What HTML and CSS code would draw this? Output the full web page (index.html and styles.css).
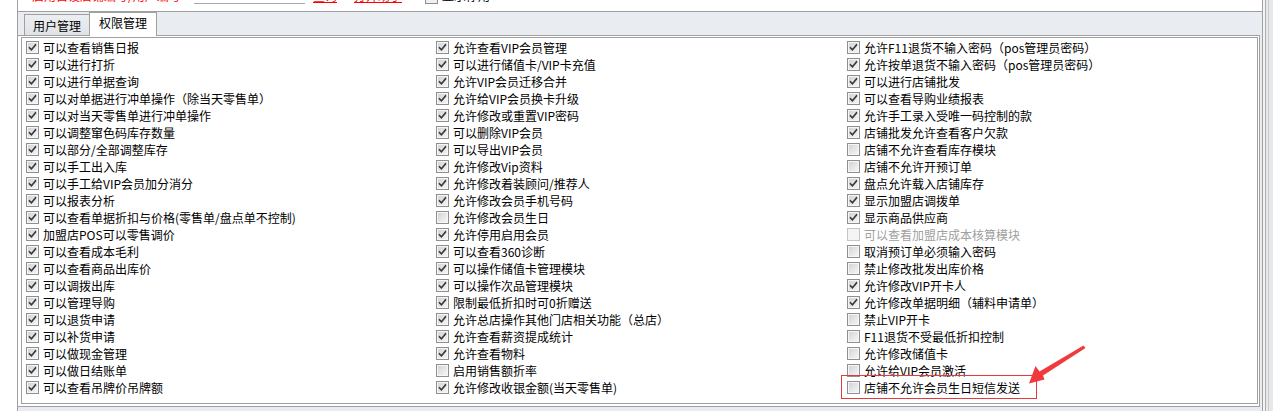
FILE: index.html
```html
<!DOCTYPE html>
<html lang="zh-CN">
<head>
<meta charset="utf-8">
<title>权限管理</title>
<link rel="stylesheet" href="styles.css">
</head>
<body>
<div class="screen">
  <div class="win">
    <div class="topbar">
      <div class="toprow">
        <span class="red lbl">启用自设店铺编号/用户编号</span>
        <span class="inp"></span>
        <span class="red link l1">查询</span>
        <span class="red link l2">打开助手</span>
        <span class="mini-cb"></span>
        <span class="blk">显示停用</span>
      </div>
    </div>
    <div class="tabctl">
      <div class="tabs">
        <div class="tab">用户管理</div>
        <div class="tab active">权限管理</div>
      </div>
      <div class="page">
        <div class="list">
          <div class="col c1">
            <div class="item"><span class="cb on"></span><span>可以查看销售日报</span></div>
            <div class="item"><span class="cb on"></span><span>可以进行打折</span></div>
            <div class="item"><span class="cb on"></span><span>可以进行单据查询</span></div>
            <div class="item"><span class="cb on"></span><span>可以对单据进行冲单操作（除当天零售单）</span></div>
            <div class="item"><span class="cb on"></span><span>可以对当天零售单进行冲单操作</span></div>
            <div class="item"><span class="cb on"></span><span>可以调整窜色码库存数量</span></div>
            <div class="item"><span class="cb on"></span><span>可以部分/全部调整库存</span></div>
            <div class="item"><span class="cb on"></span><span>可以手工出入库</span></div>
            <div class="item"><span class="cb on"></span><span>可以手工给VIP会员加分消分</span></div>
            <div class="item"><span class="cb on"></span><span>可以报表分析</span></div>
            <div class="item"><span class="cb on"></span><span>可以查看单据折扣与价格(零售单/盘点单不控制)</span></div>
            <div class="item"><span class="cb on"></span><span>加盟店POS可以零售调价</span></div>
            <div class="item"><span class="cb on"></span><span>可以查看成本毛利</span></div>
            <div class="item"><span class="cb on"></span><span>可以查看商品出库价</span></div>
            <div class="item"><span class="cb on"></span><span>可以调拨出库</span></div>
            <div class="item"><span class="cb on"></span><span>可以管理导购</span></div>
            <div class="item"><span class="cb on"></span><span>可以退货申请</span></div>
            <div class="item"><span class="cb on"></span><span>可以补货申请</span></div>
            <div class="item"><span class="cb on"></span><span>可以做现金管理</span></div>
            <div class="item"><span class="cb on"></span><span>可以做日结账单</span></div>
            <div class="item"><span class="cb on"></span><span>可以查看吊牌价吊牌额</span></div>
          </div>
          <div class="col c2">
            <div class="item"><span class="cb on"></span><span>允许查看VIP会员管理</span></div>
            <div class="item"><span class="cb on"></span><span>可以进行储值卡/VIP卡充值</span></div>
            <div class="item"><span class="cb on"></span><span>允许VIP会员迁移合并</span></div>
            <div class="item"><span class="cb on"></span><span>允许给VIP会员换卡升级</span></div>
            <div class="item"><span class="cb on"></span><span>允许修改或重置VIP密码</span></div>
            <div class="item"><span class="cb on"></span><span>可以删除VIP会员</span></div>
            <div class="item"><span class="cb on"></span><span>可以导出VIP会员</span></div>
            <div class="item"><span class="cb on"></span><span>允许修改Vip资料</span></div>
            <div class="item"><span class="cb on"></span><span>允许修改着装顾问/推荐人</span></div>
            <div class="item"><span class="cb on"></span><span>允许修改会员手机号码</span></div>
            <div class="item"><span class="cb"></span><span>允许修改会员生日</span></div>
            <div class="item"><span class="cb on"></span><span>允许停用启用会员</span></div>
            <div class="item"><span class="cb on"></span><span>可以查看360诊断</span></div>
            <div class="item"><span class="cb on"></span><span>可以操作储值卡管理模块</span></div>
            <div class="item"><span class="cb on"></span><span>可以操作次品管理模块</span></div>
            <div class="item"><span class="cb on"></span><span>限制最低折扣时可0折赠送</span></div>
            <div class="item"><span class="cb on"></span><span>允许总店操作其他门店相关功能（总店）</span></div>
            <div class="item"><span class="cb on"></span><span>允许查看薪资提成统计</span></div>
            <div class="item"><span class="cb on"></span><span>允许查看物料</span></div>
            <div class="item"><span class="cb"></span><span>启用销售额折率</span></div>
            <div class="item"><span class="cb on"></span><span>允许修改收银金额(当天零售单)</span></div>
          </div>
          <div class="col c3">
            <div class="item"><span class="cb on"></span><span>允许F11退货不输入密码（pos管理员密码）</span></div>
            <div class="item"><span class="cb on"></span><span>允许按单退货不输入密码（pos管理员密码）</span></div>
            <div class="item"><span class="cb on"></span><span>可以进行店铺批发</span></div>
            <div class="item"><span class="cb on"></span><span>可以查看导购业绩报表</span></div>
            <div class="item"><span class="cb on"></span><span>允许手工录入受唯一码控制的款</span></div>
            <div class="item"><span class="cb on"></span><span>店铺批发允许查看客户欠款</span></div>
            <div class="item"><span class="cb"></span><span>店铺不允许查看库存模块</span></div>
            <div class="item"><span class="cb"></span><span>店铺不允许开预订单</span></div>
            <div class="item"><span class="cb on"></span><span>盘点允许载入店铺库存</span></div>
            <div class="item"><span class="cb on"></span><span>显示加盟店调拨单</span></div>
            <div class="item"><span class="cb on"></span><span>显示商品供应商</span></div>
            <div class="item disabled"><span class="cb"></span><span>可以查看加盟店成本核算模块</span></div>
            <div class="item"><span class="cb"></span><span>取消预订单必须输入密码</span></div>
            <div class="item"><span class="cb"></span><span>禁止修改批发出库价格</span></div>
            <div class="item"><span class="cb on"></span><span>允许修改VIP开卡人</span></div>
            <div class="item"><span class="cb on"></span><span>允许修改单据明细（辅料申请单）</span></div>
            <div class="item"><span class="cb"></span><span>禁止VIP开卡</span></div>
            <div class="item"><span class="cb"></span><span>F11退货不受最低折扣控制</span></div>
            <div class="item"><span class="cb"></span><span>允许修改储值卡</span></div>
            <div class="item"><span class="cb"></span><span>允许给VIP会员激活</span></div>
            <div class="item"><span class="cb"></span><span>店铺不允许会员生日短信发送</span></div>
          </div>
        </div>
      </div>
    </div>
  </div>
  <div class="side"></div>
</div>
<div class="mark"></div>
<svg class="arrow" width="1273" height="411" viewBox="0 0 1273 411">
  <polygon points="1083.5,345.5 1085.5,348 1043,375.5 1044.5,379.5 1029,383.5 1035.5,366 1039.5,371.5" fill="#f03a3c"/>
</svg>
</body>
</html>
```
FILE: styles.css
```css
html, body {
  margin: 0;
  padding: 0;
}
body {
  width: 1273px;
  height: 411px;
  overflow: hidden;
  background: #ffffff;
  font-family: "Noto Sans CJK SC", "Noto Sans", sans-serif;
  font-size: 12px;
  color: #000;
  position: relative;
}
.screen {
  display: flex;
  height: 411px;
}
.win {
  margin-left: 17px;
  width: 1244px;
  border-left: 1px solid #a0a0a0;
  border-right: 1px solid #a0a0a0;
  display: flex;
  flex-direction: column;
}
.side {
  width: 10px;
  background: linear-gradient(to right, #f4f4f4 0 2px, #a9acb0 2px 3px, #e8e9eb 3px 5px, #c9cbce 5px 6px, #e6e8ea 6px);
}
.topbar {
  height: 11px;
  border-bottom: 1px solid #a0a0a0;
  overflow: hidden;
  background: #fff;
}
.toprow {
  display: flex;
  align-items: flex-start;
  height: 16px;
  line-height: 16px;
  margin-top: -12px;
  padding-left: 14px;
  white-space: nowrap;
}
.red { color: #ff0000; }
.lbl { width: 162px; overflow: hidden; }
.inp {
  width: 111px;
  height: 15px;
  border-bottom: 1px solid #a8a8a8;
}
.link { text-decoration: underline; }
.l1 { margin-left: 8px; }
.l2 { margin-left: 17px; }
.mini-cb {
  margin-left: 23px;
  width: 11px;
  height: 14px;
  border: 1px solid #8f8f8f;
  background: #f0f0f0;
}
.blk { margin-left: 4px; }

.tabctl {
  flex: 1;
  display: flex;
  flex-direction: column;
  background: #e9ecf0;
}
.tabs {
  height: 24px;
  margin-bottom: -1px;
  display: flex;
  align-items: flex-end;
  padding-left: 6px;
  position: relative;
  z-index: 1;
}
.tab {
  box-sizing: border-box;
  width: 66px;
  height: 21px;
  margin-bottom: 1px;
  border: 1px solid #a0a0a0;
  border-bottom: none;
  background: linear-gradient(#eceef1, #dfe2e7);
  text-align: center;
  line-height: 19px;
  padding-top: 1px;
}
.tab.active {
  width: 68px;
  height: 24px;
  margin-bottom: 0;
  margin-left: -1px;
  background: #fff;
  line-height: 19px;
  padding-top: 0;
}
.page {
  flex: 1;
  margin-right: 2px;
  margin-bottom: 4px;
  background: #fff;
  border-top: 1px solid #a0a0a0;
  border-right: 1px solid #a0a0a0;
  border-bottom: 1px solid #a0a0a0;
  padding: 1px 1px 2px 3px;
  display: flex;
}
.list {
  flex: 1;
  border: 1px solid #a0a0a0;
  background: #fff;
  display: flex;
  padding: 1px 0 0 4px;
}
.col { display: flex; flex-direction: column; }
.c1 { width: 410px; }
.c2 { width: 411px; }
.c3 { flex: 1; }
.item {
  height: 17px;
  display: flex;
  align-items: center;
  white-space: nowrap;
  line-height: 17px;
}
.cb {
  box-sizing: border-box;
  position: relative;
  width: 13px;
  height: 13px;
  flex: none;
  margin-right: 4px;
  border: 1px solid #8e8f8f;
  background: linear-gradient(135deg, #cdd0d4 0%, #e6e7e9 55%, #f7f7f7 100%);
  box-shadow: inset 0 0 0 1px #f6f6f6;
}
.cb.on::after {
  content: "";
  position: absolute;
  left: 0;
  top: 0;
  width: 11px;
  height: 11px;
  background: #3b3b3b;
  clip-path: polygon(2px 4.5px, 4.5px 6.5px, 8.5px 1.5px, 9.5px 3px, 4.5px 9px, 1.5px 6px);
}
.item.disabled { color: #a0a0a0; }
.item.disabled .cb {
  border-color: #c5c5c5;
  background: #f4f4f4;
  box-shadow: none;
}
.mark {
  position: absolute;
  left: 841px;
  top: 375px;
  width: 196px;
  height: 24px;
  box-sizing: border-box;
  border: 1px solid #e8383d;
}
.arrow {
  position: absolute;
  left: 0;
  top: 0;
  pointer-events: none;
}
```
